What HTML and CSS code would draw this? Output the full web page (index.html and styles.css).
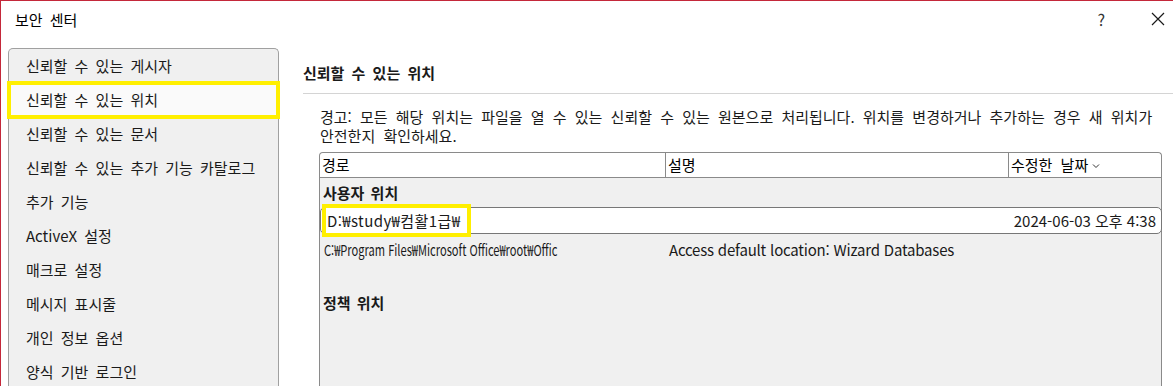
FILE: index.html
```html
<!DOCTYPE html>
<html lang="ko">

<head>
    <meta charset="UTF-8">
    <meta name="viewport" content="width=device-width, initial-scale=1.0">
    <title>보안 센터</title>
    <link rel="stylesheet" href="styles.css">
</head>

<body>
    <div class="window">
        <header class="titlebar">
            <span class="title">보안 센터</span>
            <div class="controls">
                <span class="help">?</span>
                <svg class="close" width="14" height="14" viewBox="0 0 14 14">
                    <path d="M1 1 L13 13 M13 1 L1 13" stroke="#1a1a1a" stroke-width="1.2" fill="none" />
                </svg>
            </div>
        </header>
        <div class="content">
            <nav class="sidebar">
                <div class="nav-item">신뢰할 수 있는 게시자</div>
                <div class="nav-item selected">신뢰할 수 있는 위치</div>
                <div class="nav-item">신뢰할 수 있는 문서</div>
                <div class="nav-item">신뢰할 수 있는 추가 기능 카탈로그</div>
                <div class="nav-item">추가 기능</div>
                <div class="nav-item">ActiveX 설정</div>
                <div class="nav-item">매크로 설정</div>
                <div class="nav-item">메시지 표시줄</div>
                <div class="nav-item">개인 정보 옵션</div>
                <div class="nav-item">양식 기반 로그인</div>
            </nav>
            <main class="main">
                <h2 class="heading">신뢰할 수 있는 위치</h2>
                <p class="warning">경고: 모든 해당 위치는 파일을 열 수 있는 신뢰할 수 있는 원본으로 처리됩니다. 위치를 변경하거나 추가하는 경우 새 위치가 안전한지 확인하세요.</p>
                <div class="table">
                    <div class="thead">
                        <div class="th">경로</div>
                        <div class="th">설명</div>
                        <div class="th">수정한 날짜<svg class="sort" width="8" height="6" viewBox="0 0 8 6"><path d="M1 1.5 L4 4.5 L7 1.5" stroke="#333" stroke-width="1" fill="none" /></svg></div>
                    </div>
                    <div class="group">사용자 위치</div>
                    <div class="row selected">
                        <div class="cell marked"><span class="mark">D:₩study₩컴활1급₩</span></div>
                        <div class="cell"></div>
                        <div class="cell date">2024-06-03 오후 4:38</div>
                    </div>
                    <div class="row">
                        <div class="cell"><span class="narrow">C:₩Program Files₩Microsoft Office₩root₩Offic</span></div>
                        <div class="cell desc">Access default location: Wizard Databases</div>
                        <div class="cell"></div>
                    </div>
                    <div class="group policy">정책 위치</div>
                </div>
            </main>
        </div>
    </div>
</body>

</html>
```

FILE: styles.css
```css
* {
    margin: 0;
    padding: 0;
    box-sizing: border-box;
}

body {
    font-family: "Noto Sans CJK KR", "Noto Sans", sans-serif;
    font-size: 15px;
    color: #1a1a1a;
    background-color: white;
}

.window {
    width: 1173px;
    height: 386px;
    overflow: hidden;
    border-top: 1px solid #c4283a;
    border-left: 1px solid #c4283a;
    display: flex;
    flex-direction: column;
}

.titlebar {
    height: 36px;
    display: flex;
    justify-content: space-between;
    align-items: center;
    padding-left: 14px;
    flex-shrink: 0;
}

.title {
    font-size: 15px;
    color: #000;
    word-spacing: 3px;
}

.controls {
    display: flex;
    align-items: center;
    gap: 46px;
    padding-right: 8px;
}

.help {
    font-size: 16px;
    color: #333;
}

.close {
    display: block;
}

.content {
    display: flex;
    flex: 1;
    padding-top: 11px;
    min-height: 0;
}

.sidebar {
    width: 271px;
    margin-left: 7px;
    background-color: #f0f0f0;
    border: 1px solid #a0a0a0;
    border-bottom: none;
    border-radius: 5px 5px 0 0;
    flex-shrink: 0;
}

.nav-item {
    height: 34px;
    line-height: 34px;
    padding-left: 17px;
    word-spacing: 3px;
    white-space: nowrap;
}

.nav-item.selected {
    background-color: #fafafa;
    outline: 4px solid #ffef00;
    outline-offset: -2px;
}

.main {
    flex: 1;
    padding-left: 24px;
    display: flex;
    flex-direction: column;
    min-width: 0;
}

.heading {
    font-size: 15px;
    font-weight: bold;
    line-height: 22px;
    margin-top: 14px;
    padding-bottom: 9px;
    border-bottom: 1px solid #d4d4d4;
    word-spacing: 3px;
}

.warning {
    line-height: 19px;
    margin: 13px 11px 0 17px;
    word-spacing: 4px;
    word-break: keep-all;
}

.table {
    flex: 1;
    margin: 7px 11px 0 16px;
    background-color: #f0f0f0;
    border: 1px solid #8a8a8a;
    border-bottom: none;
    border-radius: 4px 4px 0 0;
}

.thead,
.row {
    display: grid;
    grid-template-columns: 345px 343px 1fr;
}

.thead {
    height: 25px;
    background-color: white;
    border-bottom: 1px solid #8a8a8a;
    border-radius: 4px 4px 0 0;
}

.th {
    line-height: 24px;
    padding-left: 2px;
    color: #000;
    display: flex;
    align-items: center;
    white-space: nowrap;
    word-spacing: 4px;
}

.th + .th {
    border-left: 1px solid #8a8a8a;
}

.sort {
    margin-left: 4px;
    margin-top: 2px;
}

.group {
    height: 29px;
    line-height: 29px;
    padding-left: 3px;
    font-weight: bold;
    word-spacing: 2px;
}

.row {
    height: 30px;
    align-items: center;
}

.row.selected {
    height: 27px;
    background-color: white;
    border: 1px solid #777;
    border-radius: 5px;
    margin-right: -1px;
}

.cell {
    padding-left: 4px;
    white-space: nowrap;
    overflow: hidden;
}

.cell.marked {
    overflow: visible;
}

.narrow {
    display: inline-block;
    transform: scaleX(0.74);
    transform-origin: left center;
}

.desc {
    letter-spacing: -0.2px;
}

.date {
    text-align: right;
    padding-right: 5px;
}

.mark {
    display: inline-block;
    margin-left: 1px;
    padding: 0 7px 0 1px;
    line-height: 25px;
    letter-spacing: 0.4px;
    outline: 4px solid #ffef00;
}

.policy {
    margin-top: 24px;
}
```
